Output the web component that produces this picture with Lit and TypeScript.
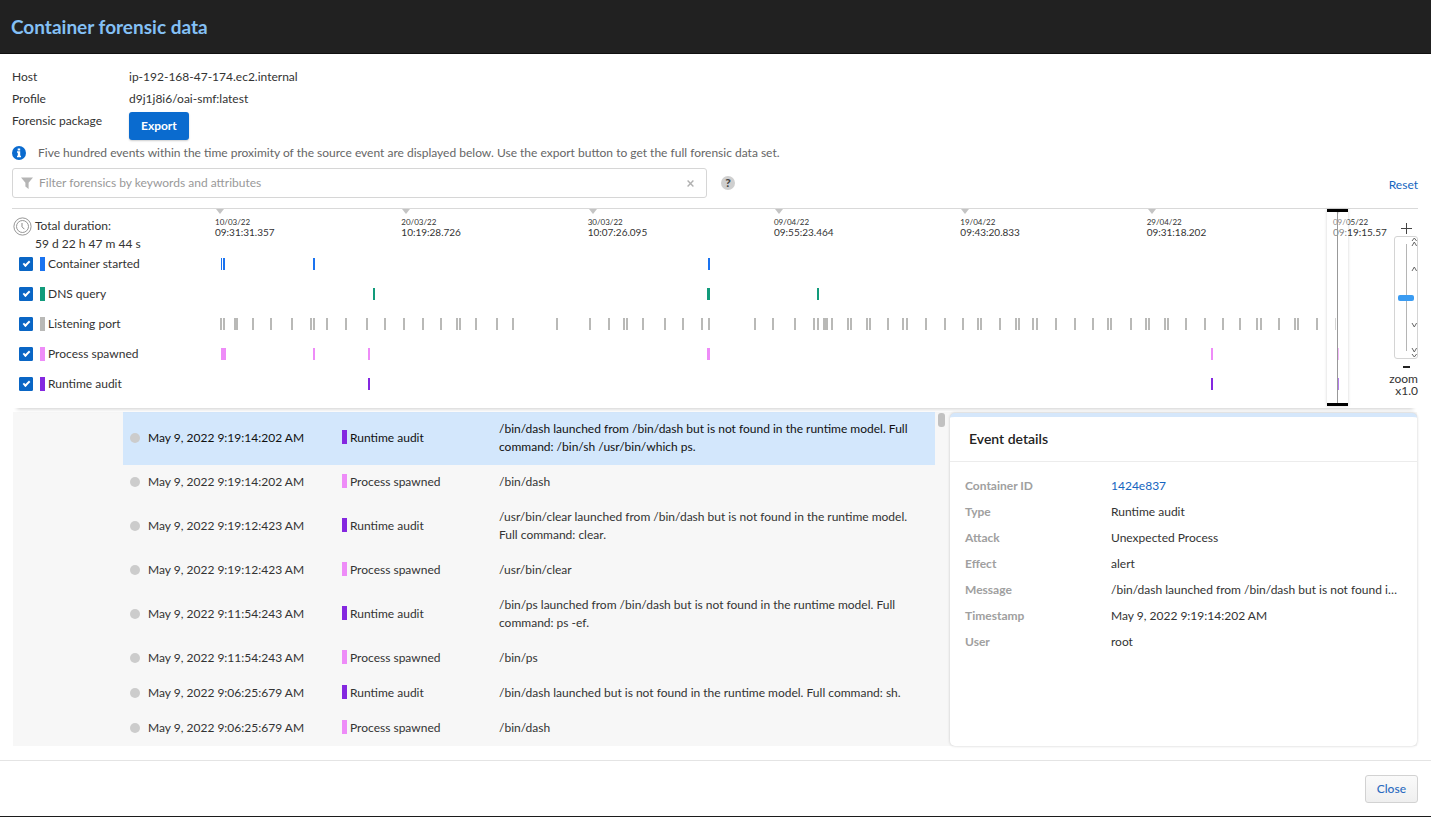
import { LitElement, html, css, svg } from "lit";
import { customElement, property, state } from "lit/decorators.js";
import { classMap } from "lit/directives/class-map.js";

type Kind = "container" | "dns" | "port" | "process" | "audit";

/** A mark on a lane: offset on the time axis and its thickness. */
type Mark = [number, number];

interface Lane {
  kind: Kind;
  label: string;
  marks: Mark[];
}

interface ForensicEvent {
  time: string;
  kind: Kind;
  message: string;
}

const AXIS_LENGTH = 1118;

const KIND_LABELS: Record<Kind, string> = {
  container: "Container started",
  dns: "DNS query",
  port: "Listening port",
  process: "Process spawned",
  audit: "Runtime audit",
};

const PORT_OFFSETS = [
  0, 3, 32, 50, 71, 90, 93, 106, 125, 146, 164, 183, 202, 220, 239, 236, 255, 276, 292,
  336, 369, 388, 403, 406, 422, 444, 462, 481, 488, 534, 552, 574, 593, 597, 611, 627,
  630, 646, 649, 667, 682, 686, 705, 724, 742, 757, 760, 779, 795, 798, 812, 816, 835,
  854, 872, 887, 890, 910, 925, 928, 944, 947, 965, 984, 1002, 1019, 1036, 1040, 1058,
  1074, 1077, 1096,
];

const LANES: Lane[] = [
  { kind: "container", label: "Container started", marks: [[1, 1], [3, 2], [93, 2], [488, 2]] },
  { kind: "dns", label: "DNS query", marks: [[153, 2], [487, 3], [597, 2]] },
  {
    kind: "port",
    label: "Listening port",
    marks: [...PORT_OFFSETS.map((x): Mark => [x, 2]), [14, 4], [603, 5], [1115, 1]],
  },
  { kind: "process", label: "Process spawned", marks: [[1, 5], [93, 2], [148, 2], [487, 3], [991, 2], [1117, 2]] },
  { kind: "audit", label: "Runtime audit", marks: [[148, 2], [991, 2], [1117, 2]] },
];

const TICKS = [
  ["10/03/22", "09:31:31.357"],
  ["20/03/22", "10:19:28.726"],
  ["30/03/22", "10:07:26.095"],
  ["09/04/22", "09:55:23.464"],
  ["19/04/22", "09:43:20.833"],
  ["29/04/22", "09:31:18.202"],
  ["09/05/22", "09:19:15.57"],
];

const EVENTS: ForensicEvent[] = [
  { time: "May 9, 2022 9:19:14:202 AM", kind: "audit", message: "/bin/dash launched from /bin/dash but is not found in the runtime model. Full command: /bin/sh /usr/bin/which ps." },
  { time: "May 9, 2022 9:19:14:202 AM", kind: "process", message: "/bin/dash" },
  { time: "May 9, 2022 9:19:12:423 AM", kind: "audit", message: "/usr/bin/clear launched from /bin/dash but is not found in the runtime model. Full command: clear." },
  { time: "May 9, 2022 9:19:12:423 AM", kind: "process", message: "/usr/bin/clear" },
  { time: "May 9, 2022 9:11:54:243 AM", kind: "audit", message: "/bin/ps launched from /bin/dash but is not found in the runtime model. Full command: ps -ef." },
  { time: "May 9, 2022 9:11:54:243 AM", kind: "process", message: "/bin/ps" },
  { time: "May 9, 2022 9:06:25:679 AM", kind: "audit", message: "/bin/dash launched but is not found in the runtime model. Full command: sh." },
  { time: "May 9, 2022 9:06:25:679 AM", kind: "process", message: "/bin/dash" },
];

const kindColors = css`
  .container { --kind: #1a73f0; }
  .dns { --kind: #129b7b; }
  .port { --kind: #b9b9b7; }
  .process { --kind: #ee8cf8; }
  .audit { --kind: #8428e0; }
`;

@customElement("event-timeline")
class EventTimeline extends LitElement {
  @state() private hidden_: Set<Kind> = new Set();

  static styles = [
    kindColors,
    css`
      :host {
        display: grid;
        grid-template-columns: 208px minmax(0, 1fr) 80px;
        position: relative;
        border-top: 1px solid #d9d9d9;
        background: #fff;
        box-shadow: 0 6px 4px -5px rgba(0, 0, 0, 0.2);
        color: #333;
      }
      .legend { display: flex; flex-direction: column; padding: 0 0 9px 1px; }
      .duration {
        display: flex;
        gap: 3px;
        box-sizing: border-box;
        height: 40px;
        padding-top: 8px;
        line-height: 18px;
      }
      .duration svg { flex: none; }
      .lane-label {
        display: flex;
        align-items: center;
        height: 30px;
        padding-left: 6px;
      }
      .check {
        appearance: none;
        display: grid;
        place-items: center;
        width: 14px;
        height: 14px;
        margin: 0 7px 0 0;
        border-radius: 1px;
        border: 1px solid #0a66c5;
        background: #fff;
      }
      .check:checked { background: #0a66c5; }
      .check:checked::after {
        content: "";
        width: 5px;
        height: 2px;
        margin-bottom: 2px;
        border: solid #fff;
        border-width: 0 0 2px 2px;
        transform: rotate(-45deg);
      }
      .chip { width: 5px; height: 14px; margin-right: 3px; background: var(--kind); }
      .track { position: relative; padding-bottom: 9px; }
      .axis {
        display: grid;
        grid-template-columns: repeat(6, minmax(0, 1fr)) 0;
        height: 40px;
      }
      .tick { font-size: 10px; line-height: 10px; white-space: nowrap; }
      .tick::before {
        content: "";
        display: block;
        width: 0;
        margin: 0 0 3px -4px;
        border: 4px solid transparent;
        border-top: 5px solid #c4c4c4;
        border-bottom: 0;
      }
      .date, .clock { display: block; margin-left: -5px; }
      .date { font-size: 8px; }
      .lane { display: block; width: 100%; height: 30px; overflow: visible; }
      .lane rect { fill: var(--kind); }
      .brush {
        position: absolute;
        z-index: 1;
        top: 0;
        bottom: 2px;
        left: calc(100% - 11px);
        box-sizing: border-box;
        width: 21px;
        border: solid #000;
        border-width: 3px 0;
        background: linear-gradient(#999, #999) center / 1px 100% no-repeat, rgba(255, 255, 255, 0.4);
        box-shadow: 0 0 3px rgba(0, 0, 0, 0.18);
      }
      .zoom {
        display: flex;
        flex-direction: column;
        align-items: flex-end;
        padding-top: 11px;
      }
      .step {
        display: grid;
        place-items: center;
        width: 24px;
        height: 16px;
        padding: 0;
        border: 0;
        background: none;
      }
      .rail {
        position: relative;
        display: flex;
        justify-content: center;
        box-sizing: border-box;
        width: 24px;
        height: 123px;
        padding: 7px 0;
        border: 1px solid #d4d4d4;
        border-radius: 3px;
      }
      .rail svg { position: absolute; inset: 0; pointer-events: none; }
      .slider {
        appearance: none;
        writing-mode: vertical-lr;
        width: 16px;
        height: 107px;
        margin: 0;
        background: linear-gradient(#b5b5b5, #b5b5b5) center / 1px 100% no-repeat;
      }
      .slider::-webkit-slider-thumb {
        appearance: none;
        width: 16px;
        height: 6px;
        border-radius: 2px;
        background: #3b9cf2;
      }
      .level { text-align: right; line-height: 12px; margin-top: -2px; }
      .level span { display: block; }
    `,
  ];

  private toggle(kind: Kind) {
    const next = new Set(this.hidden_);
    next.has(kind) ? next.delete(kind) : next.add(kind);
    this.hidden_ = next;
  }

  render() {
    const pct = (x: number) => `${(x / AXIS_LENGTH) * 100}%`;
    return html`
      <div class="legend">
        <div class="duration">
          <svg width="19" height="19" viewBox="0 0 19 19" fill="none" stroke="#8a8a8a">
            <circle cx="9.5" cy="9.5" r="8.6" stroke-width=".9" />
            <circle cx="9.5" cy="9.5" r="6" stroke-width=".9" />
            <path d="M9 6v3.8l2.4 2.4" stroke-width="1" />
          </svg>
          <span>Total duration:<br />59 d 22 h 47 m 44 s</span>
        </div>
        ${LANES.map(
          (lane) => html`
            <label class="lane-label ${lane.kind}">
              <input class="check" type="checkbox" .checked=${!this.hidden_.has(lane.kind)}
                @change=${() => this.toggle(lane.kind)} />
              <span class="chip"></span>${lane.label}
            </label>
          `
        )}
      </div>
      <div class="track">
        <div class="axis">
          ${TICKS.map(
            ([date, clock]) => html`
              <div class="tick"><span class="date">${date}</span><span class="clock">${clock}</span></div>
            `
          )}
        </div>
        ${LANES.map(
          (lane) => html`
            <svg class="lane ${lane.kind}">
              ${this.hidden_.has(lane.kind)
                ? null
                : lane.marks.map(([x, w]) => svg`<rect x=${pct(x)} y="9" width=${w} height="12" />`)}
            </svg>
          `
        )}
        <div class="brush"></div>
      </div>
      <div class="zoom">
        <button class="step" aria-label="Zoom in">
          <svg width="11" height="11" viewBox="0 0 11 11" stroke="#444"><path d="M5.5 0v11M0 5.5h11" /></svg>
        </button>
        <div class="rail">
          <input class="slider" type="range" min="0" max="100" value="50" aria-label="Zoom level" />
          <svg width="22" height="121" viewBox="0 0 22 121" fill="none" stroke="#666">
            <path d="M17 4l2.3-3 2.3 3M17 9l2.3-4 2.3 4M17 34l2.3-4 2.3 4M17 86l2.3 4 2.3-4M17 111l2.3 4 2.3-4M17 117l2.3 3 2.3-3" />
          </svg>
        </div>
        <button class="step" aria-label="Zoom out">
          <svg width="7" height="2" viewBox="0 0 7 2"><path fill="#222" d="M0 0h7v2H0z" /></svg>
        </button>
        <div class="level"><span>zoom</span><span>x1.0</span></div>
      </div>
    `;
  }
}

@customElement("event-list")
class EventList extends LitElement {
  @property({ type: Number }) selected = 0;

  static styles = [
    kindColors,
    css`
      :host {
        display: flex;
        align-items: flex-start;
        gap: 3px;
        min-width: 0;
        padding-left: 110px;
        color: #333;
      }
      .events { flex: 1; border-collapse: collapse; table-layout: fixed; width: 100%; line-height: 18px; }
      .when-col { width: 219px; }
      .kind-col { width: 157px; }
      td { padding: 8px 0 9px; vertical-align: middle; }
      .when { padding-left: 7px; }
      .cell { display: flex; align-items: center; }
      .dot { width: 10px; height: 10px; margin-right: 8px; border-radius: 50%; background: #ccc; }
      .chip { width: 5px; height: 14px; margin: 0 3px 3px 0; background: var(--kind); }
      .message { padding-right: 12px; }
      .active { background: #d3e7fc; color: #111; }
      .thumb { flex: none; width: 7px; height: 14px; margin-top: 1px; border-radius: 3px; background: #c1c1c1; }
    `,
  ];

  render() {
    return html`
      <table class="events">
        <colgroup><col class="when-col" /><col class="kind-col" /><col /></colgroup>
        <tbody>
          ${EVENTS.map(
            (e, i) => html`
              <tr class=${classMap({ active: i === this.selected })} @click=${() => (this.selected = i)}>
                <td class="when"><span class="cell"><span class="dot"></span>${e.time}</span></td>
                <td class=${e.kind}><span class="cell"><span class="chip"></span>${KIND_LABELS[e.kind]}</span></td>
                <td class="message">${e.message}</td>
              </tr>
            `
          )}
        </tbody>
      </table>
      <div class="thumb"></div>
    `;
  }
}

@customElement("event-details")
class EventDetails extends LitElement {
  static styles = css`
    :host {
      display: block;
      box-sizing: border-box;
      border-top: 4px solid #d5e7fb;
      border-radius: 5px;
      background: #fff;
      box-shadow: 0 0 3px rgba(0, 0, 0, 0.2);
      color: #333;
    }
    .title {
      margin: 0;
      padding: 0 19px;
      border-bottom: 1px solid #ececec;
      font-size: 14px;
      font-weight: 600;
      line-height: 44px;
      color: #222;
    }
    .fields {
      display: grid;
      grid-template-columns: 146px minmax(0, 1fr);
      margin: 0;
      padding: 11px 20px 11px 15px;
      line-height: 26px;
    }
    dt { color: #a0a0a0; font-weight: 700; }
    dd { margin: 0; overflow: hidden; white-space: nowrap; text-overflow: ellipsis; }
    a { color: #1565c0; text-decoration: none; }
  `;

  render() {
    const fields: [string, unknown][] = [
      ["Container ID", html`<a href="#1424e837">1424e837</a>`],
      ["Type", "Runtime audit"],
      ["Attack", "Unexpected Process"],
      ["Effect", "alert"],
      ["Message", EVENTS[0].message],
      ["Timestamp", EVENTS[0].time],
      ["User", "root"],
    ];
    return html`
      <h2 class="title">Event details</h2>
      <dl class="fields">${fields.map(([name, value]) => html`<dt>${name}</dt><dd>${value}</dd>`)}</dl>
    `;
  }
}

@customElement("app-root")
class AppRoot extends LitElement {
  static styles = css`
    :host {
      display: flex;
      flex-direction: column;
      box-sizing: border-box;
      min-height: 100vh;
      border-bottom: 1px solid #1c1c1c;
      background: #fff;
      color: #333;
      font: 12px/22px Lato, "Open Sans", sans-serif;
    }
    button, input { font: inherit; }
    .header {
      padding: 1px 11px 0;
      border-bottom: 1px solid #111;
      background: #212121;
    }
    .header h1 { margin: 0; font-size: 19px; font-weight: 700; line-height: 52px; color: #84c0f5; }
    .body { display: flex; flex: 1; flex-direction: column; padding: 12px 13px 14px 12px; }
    .facts { display: grid; grid-template-columns: 117px minmax(0, 1fr); margin: 0; }
    .facts dd { margin: 0; }
    .export {
      display: block;
      height: 28px;
      margin-top: 2px;
      padding: 0 12px;
      border: 0;
      border-radius: 3px;
      background: #0a6bcf;
      box-shadow: 0 1px 2px rgba(0, 0, 0, 0.2);
      color: #fff;
      font-weight: 700;
    }
    .notice { display: flex; align-items: center; gap: 12px; margin: 2px 0 0; color: #666; }
    .toolbar { display: flex; align-items: center; gap: 14px; margin-top: 4px; }
    .filter {
      display: flex;
      flex: 0 1 695px;
      align-items: center;
      gap: 6px;
      box-sizing: border-box;
      height: 30px;
      padding: 0 8px;
      border: 1px solid #d6d6d6;
      border-radius: 3px;
    }
    .filter input { flex: 1; min-width: 0; padding: 0; border: 0; outline: 0; background: none; color: #333; }
    .filter input::placeholder { color: #999; opacity: 1; }
    .icon-button { display: grid; place-items: center; width: 16px; height: 16px; padding: 0; border: 0; background: none; }
    .help { width: 14px; height: 14px; border-radius: 50%; background: #cfcfcf; color: #444; font-size: 12px; font-weight: 900; line-height: 14px; }
    .reset { align-self: flex-end; margin-left: auto; color: #1565c0; line-height: 26px; text-decoration: none; }
    event-timeline { z-index: 1; margin-top: 10px; line-height: 18px; }
    .workspace {
      display: grid;
      flex: 1;
      grid-template-columns: minmax(0, 932fr) minmax(0, 467fr);
      gap: 5px;
      margin: 4px 1px 0;
      background: #f7f7f7;
    }
    event-details { margin-top: 1px; }
    .footer { display: flex; justify-content: flex-end; padding: 14px 13px 13px; border-top: 1px solid #e4e4e4; }
    .close {
      height: 28px;
      padding: 0 11px;
      border: 1px solid #d2d2d2;
      border-radius: 3px;
      background: linear-gradient(#fafafa, #efefef);
      color: #2a6bc0;
      font-weight: 500;
    }
  `;

  render() {
    return html`
      <header class="header"><h1>Container forensic data</h1></header>
      <main class="body">
        <dl class="facts">
          <dt>Host</dt>
          <dd>ip-192-168-47-174.ec2.internal</dd>
          <dt>Profile</dt>
          <dd>d9j1j8i6/oai-smf:latest</dd>
          <dt>Forensic package</dt>
          <dd><button class="export">Export</button></dd>
        </dl>
        <p class="notice">
          <svg width="14" height="14" viewBox="0 0 14 14">
            <circle cx="7" cy="7" r="7" fill="#0a6bcf" />
            <path fill="#fff" d="M5.7 2.4h2.5v2H5.700zM5 5.300h3.200v4.400H9v1.500H5V9.700h.8V6.800H5z" />
          </svg>
          <span>Five hundred events within the time proximity of the source event are displayed below. Use the export button to get the full forensic data set.</span>
        </p>
        <div class="toolbar">
          <div class="filter">
            <svg width="12" height="12" viewBox="0 0 12 12"><path fill="#b5b5b5" d="M0 .5h12L7.600 5.700V12L4.400 9.600V5.700z" /></svg>
            <input type="text" placeholder="Filter forensics by keywords and attributes" aria-label="Filter forensics" />
            <button class="icon-button" aria-label="Clear filter">
              <svg width="7" height="7" viewBox="0 0 7 7" stroke="#b0b0b0" stroke-width="1.400"><path d="M.6.6l5.800 5.800M6.400.6L.6 6.400" /></svg>
            </button>
          </div>
          <button class="icon-button help" aria-label="Filter help">?</button>
          <a class="reset" href="#reset">Reset</a>
        </div>
        <event-timeline></event-timeline>
        <section class="workspace">
          <event-list></event-list>
          <event-details></event-details>
        </section>
      </main>
      <footer class="footer"><button class="close">Close</button></footer>
    `;
  }
}
